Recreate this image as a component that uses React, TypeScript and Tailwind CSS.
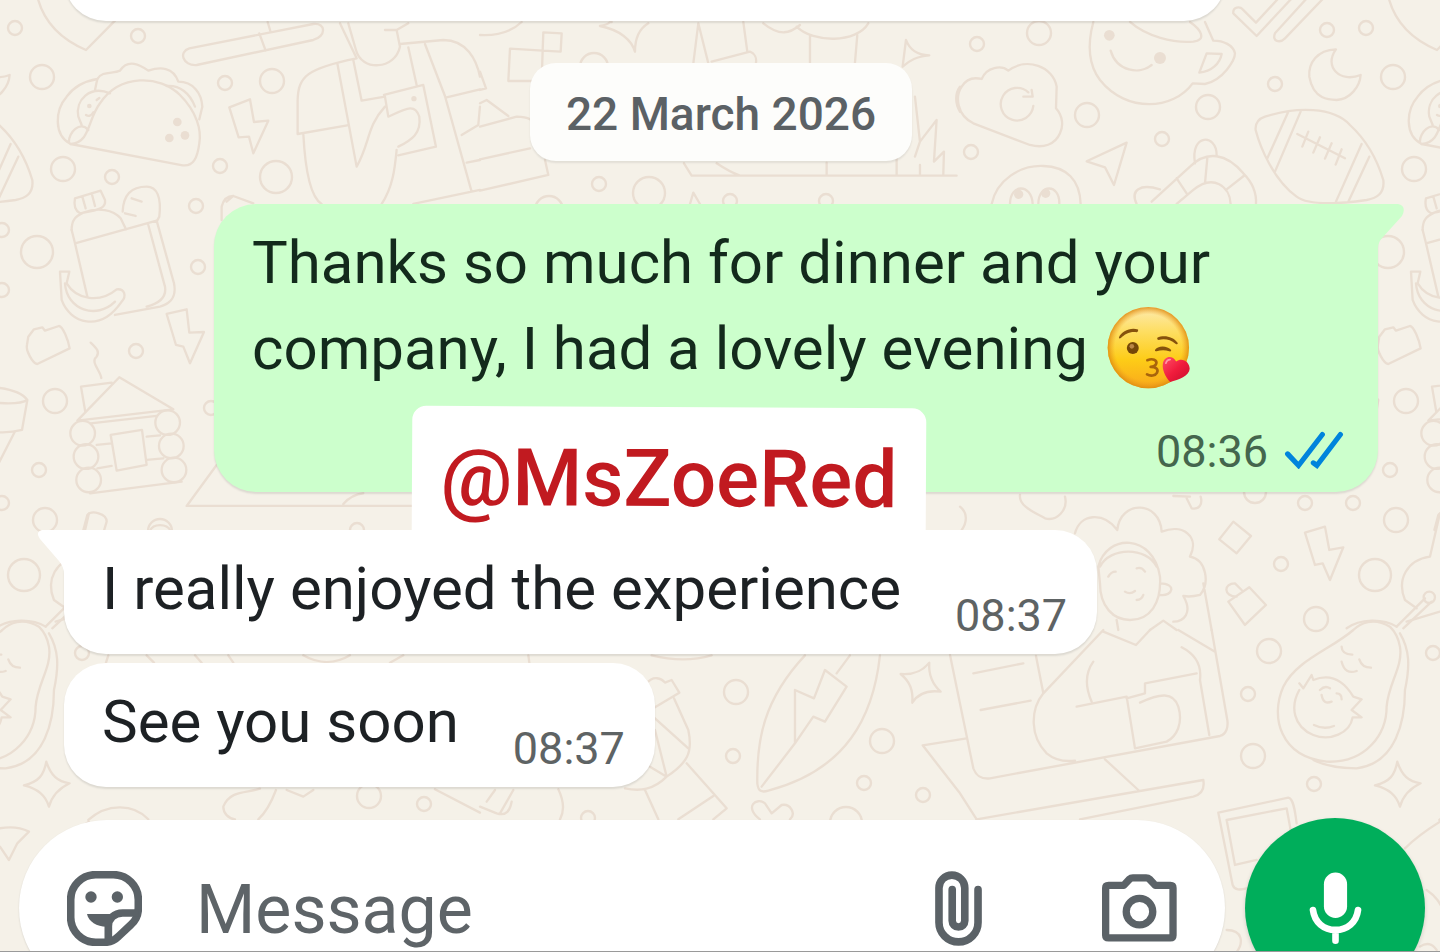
import React, { useState } from 'react';

interface Message {
  id: number;
  text: string;
  time: string;
  tail: boolean;
}

const received: Message[] = [
  { id: 1, text: 'I really enjoyed the experience', time: '08:37', tail: true },
  { id: 2, text: 'See you soon', time: '08:37', tail: false },
];

// [cx, cy, r] of the small rings scattered over the wallpaper
const rings: [number, number, number][] = [
  [15, 28, 7], [138, 36, 7], [42, 77, 12], [225, 83, 7], [272, 81, 12],
  [63, 169, 12], [112, 177, 7], [220, 166, 7], [276, 177, 16], [196, 206, 7],
  [198, 267, 7], [37, 252, 16], [2, 230, 7], [2, 290, 7], [136, 351, 7],
  [55, 401, 12], [211, 408, 7], [39, 470, 7], [2, 503, 7], [45, 520, 12],
  [24, 575, 16], [82, 653, 7], [594, 67, 14], [599, 184, 7], [649, 193, 16],
  [549, 210, 14], [730, 201, 7], [826, 201, 7], [977, 44, 7], [1039, 33, 12],
  [971, 152, 7], [1087, 115, 12], [1208, 107, 12], [1162, 139, 7], [1275, 84, 7],
  [1327, 30, 7], [1305, 503, 7], [1255, 492, 11], [1281, 564, 7],
  [1269, 651, 12], [1316, 619, 12], [1248, 694, 7], [1253, 756, 12], [1314, 784, 7],
  [736, 692, 12], [733, 756, 7], [882, 741, 12], [864, 783, 7], [923, 795, 7],
  [846, 823, 16], [369, 796, 12], [424, 804, 7], [588, 818, 7], [160, 531, 12],
  [357, 530, 7],
];

const Doodles: React.FC = () => (
  <g id="doodles" fill="none" stroke="#eaded2" strokeLinecap="round" strokeLinejoin="round">
    <g strokeWidth="2.4">
      {rings.map(([cx, cy, r], i) => (
        <circle key={i} cx={cx} cy={cy} r={r} />
      ))}
    </g>

    <g transform="scale(.3333)" strokeWidth="7">
      {/* heart */}
      <path d="M105-60C110 40 165 110 258 150L345 62" />
      {/* taco */}
      <path d="M212 432C160 405 165 330 200 290 220 262 255 243 292 237 305 212 340 222 360 212 385 175 420 195 445 212 480 200 520 200 535 245 580 245 605 280 607 320L598 358" />
      <path d="M212 432C270 430 262 360 300 310 360 220 480 225 540 285 590 335 605 390 598 430 592 475 580 500 548 496Z" />
      <path d="M292 237 285 270M330 280C270 255 225 300 235 350L245 375M265 390C240 360 205 400 207 425M500 258C540 255 570 280 585 320M258 345q12 8 22-8M290 300l8-6" />
      <g fill="#eaded2" stroke="none">
        <circle cx="532" cy="366" r="13" />
        <circle cx="508" cy="414" r="13" />
        <circle cx="555" cy="406" r="13" />
        <circle cx="268" cy="318" r="7" />
        <circle cx="1242" cy="296" r="8" />
      </g>
      {/* rolling pin and bolts */}
      <path d="M568 145 940 72C980 68 978 110 940 120L590 195C548 198 535 155 568 145ZM778 100 797 152M803 66 812 96" />
      <path d="M688 322 750 298 762 366 805 362 760 460 747 410 716 412Z" />
      <path d="M500 942 560 928 568 998 612 996 570 1090 550 1040 528 1035Z" />
      {/* person with phone */}
      <path d="M1020 70 1070 175C920 205 895 230 893 300V402L1042 376M1045 70 1068 150C1085 215 1185 210 1200 140L1190 90 1225 70M1155 90H1190M1200 132 1330 120C1400 120 1430 180 1440 230M1012 190 1070 500C1110 430 1100 380 1155 320M1060 180 1085 302 1155 290M1225 142 1250 255M1275 132 1335 288 1415 575M1340 292 1440 268M910 400C915 500 930 590 965 612M1145 612C1180 560 1185 500 1190 450M1152 285 1270 255 1308 440 1195 466M1155 290 1165 350C1220 325 1245 310 1258 350 1265 400 1235 420 1195 440M1440 320 1435 375 1385 405M1240 612 1440 570M1400 488 1440 480" />
      {/* lunch bag */}
      <path d="M215 690C215 660 225 650 250 638 295 620 340 630 362 655L378 688M368 635C370 580 400 560 440 560 470 560 485 590 478 650L470 665M395 595l30 10M375 640l32 8M225 595 302 572 315 600C318 620 310 628 240 640 222 630 222 610 225 595ZM247 590l10 35M275 580l10 38" />
      <path d="M225 730 470 662 522 850C530 890 515 910 480 920L345 945M225 730 215 690M225 730 262 890M445 675 495 860C500 890 480 910 440 920" />
      <path d="M180 815H208L200 850C230 900 300 910 350 868 375 865 380 890 365 905 300 1000 210 970 185 900ZM195 850C200 930 290 960 345 905" />
      <path d="M665 660V620C670 600 680 588 700 588L760 610M680 605 700 588" />
      {/* steam and log cabin */}
      <path d="M272 1028C290 1045 300 1055 290 1070 270 1085 300 1110 304 1134" />
      <path d="M232 1262 358 1132 520 1228 232 1262M256 1236 243 1160 335 1148M272 1270 470 1248M290 1335 335 1330M440 1310 480 1306M292 1405 335 1398M440 1380 490 1375M270 1480 545 1445M332 1305 426 1290 440 1395 350 1412Z" />
      <g>
        <circle cx="248" cy="1300" r="37" />
        <circle cx="258" cy="1370" r="37" />
        <circle cx="266" cy="1440" r="37" />
        <circle cx="503" cy="1268" r="37" />
        <circle cx="514" cy="1338" r="37" />
        <circle cx="522" cy="1410" r="37" />
      </g>
      {/* cup on the left edge */}
      <path d="M-70 1160C0 1160 60 1170 82 1200L66 1290C30 1300-20 1298-60 1290M82 1200C60 1215 0 1210-60 1205M44 1296-40 1460" />
      <path d="M650 1395 560 1518H1240M1030 1512C1050 1490 1070 1482 1090 1480" />
      <path d="M250 1590 262 1545C275 1530 320 1540 320 1565L312 1592M450 1592C460 1570 500 1570 512 1592" />
    </g>

    <g transform="translate(480 0) scale(.3333)" strokeWidth="7">
      <path d="M0 105C60 108 100 90 125 66M190 97 245 100 242 155 188 152ZM188 152 90 146 85 243H185L188 152M0 215 18 265 0 270M360 78C400 70 380 66 395 66M360 78C420 90 455 120 465 155 465 110 480 85 505 70M655 70 640 190M655 70 685 190M790 66 802 155M695 185 810 155C825 160 830 175 828 188M850 70C900 110 930 100 960 75M950 80C1000 130 1130 130 1165 70M990 110V188M1132 105 1125 188" />
      <path d="M1278 120C1290 150 1310 165 1348 166 1310 170 1290 180 1268 200ZM0 310 20 300 85 348M0 380 110 350C130 350 140 352 150 358M0 478 150 445M0 572 205 525 195 480M612 490 635 527H1430M710 490C740 510 760 520 780 527M1040 488V525M1250 475V525M1305 290 1320 425 1370 360 1362 485 1392 455 1390 525M1320 425 1305 470M1320 495V525M1440 260C1425 280 1425 310 1440 335M630 612 640 578 660 612" />
    </g>

    <g transform="translate(960 0) scale(.3333)" strokeWidth="7">
      {/* cloud */}
      <path d="M65 237C80 200 125 195 145 212 200 170 280 200 290 260L288 325C310 350 310 380 300 400 285 435 250 445 210 435L40 370C-10 345-15 290 5 260 20 235 45 232 65 237ZM220 318A49 49 0 1 1 205 277M215 270 218 290H190" />
      {/* smiling cup */}
      <path d="M400 66C380 140 390 200 420 240 500 340 640 330 698 250L735 252C790 240 825 180 825 160 820 135 790 122 760 122L735 66M510 66C560 110 640 130 700 125 740 120 725 90 690 66M740 160 785 162C780 190 755 215 718 218ZM452 152C470 215 540 225 575 195" />
      <g fill="#eaded2" stroke="none">
        <circle cx="448" cy="106" r="16" />
        <circle cx="600" cy="174" r="18" />
        <circle cx="176" cy="583" r="14" />
        <circle cx="257" cy="580" r="14" />
      </g>
      {/* double check */}
      <path d="M820 40C818 20 840 18 848 28L888 68 960-10M820 40 890 108 1000-10M1045-10 945 100C935 125 960 130 975 115L1095-10" />
      <path d="M1128 148C1070 150 1045 190 1048 230 1060 300 1110 300 1130 300 1170 298 1200 260 1202 225 1140 250 1090 200 1128 148Z" />
      {/* football */}
      <path d="M915 350C1010 320 1120 320 1170 375 1230 430 1255 490 1270 540 1275 580 1250 595 1220 600 1150 610 1050 620 1010 590 940 540 900 440 887 390 885 365 900 355 915 350ZM985 335 922 475M1022 335 945 515M1205 432 1128 605M1228 470 1165 605M1012 402 1155 475M1045 395l-18 45M1080 412l-20 46M1115 430l-20 46M1145 448l-18 46" />
      <path d="M500 428 380 484 435 502 462 555Z" />
      <path d="M95 612C110 540 180 495 250 498 320 500 360 540 362 612M150 612C150 550 215 550 218 612M235 612C235 550 300 550 298 612" />
      <path d="M530 612C510 570 540 550 600 568M575 605 690 500C740 450 800 460 850 520 880 550 890 580 888 612M705 490C690 400 770 400 770 465M650 612 700 570C760 520 810 560 812 612M650 535 680 580M742 475 735 550M855 525 800 568" />
    </g>

    <g transform="translate(960 300) scale(.3333)" strokeWidth="7">
      <path d="M180 585C175 620 230 640 255 655 290 665 325 630 315 590M0 620C25 640 20 670 5 690M640 588 690 590M680 595 695 625C720 630 728 610 722 590" />
      {/* person with curly hair */}
      <path d="M345 700C360 640 430 635 472 690 480 600 600 600 605 695 670 670 720 710 690 770 740 780 750 850 720 885 700 890 680 890 670 888 700 940 670 965 640 965M415 800C440 700 580 700 600 830 605 910 570 960 510 960 460 960 420 920 420 850ZM420 800C450 740 560 740 590 800M600 850C650 850 640 890 600 885M470 960 475 990M730 850 755 990M445 830q8-15 22-15M530 805q15-5 25 10M495 875q15 10 30-2M530 900q15 0 20-15M570 990 610 962 650 990" />
      <path d="M820 665 873 708 830 760 778 718ZM1035 698 1095 680 1108 750 1150 742 1110 840 1088 790 1065 795ZM805 905 868 862 918 915 855 975ZM830 890C790 890 790 850 825 850L845 870" />
      <path d="M1258 110 1275 88 1300 82 1308 92 1350 78C1362 80 1378 120 1382 145L1285 192C1270 190 1250 150 1254 135Z" />
      {/* lute */}
      <path d="M1440 640 1410 770C1340 780 1310 840 1335 900L1370 925M1310 980 1395 895M1330 985 1415 905" />
      <circle cx="1408" cy="892" r="17" />
      <path d="M1440 935 1340 965M1160 985C1200 955 1270 955 1310 980" />
    </g>

    <g transform="translate(960 630) scale(.3333)" strokeWidth="7">
      {/* laptop scene */}
      <path d="M-30 75 40 415C50 440 65 448 90 445L780 318C800 312 805 290 802 270L755 0M40 130 190 100M62 240 212 212M228 78 250 190M430 0 250 190C210 240 210 320 260 370 290 395 320 395 345 392M430 5 528 45 570 0M655 0 765 65M400 95C375 130 375 170 395 215M350 230 500 200 525 355M500 205 555 190V160L710 130M540 218C600 190 640 185 655 230 670 280 650 320 620 335L525 355M665 52C710 75 725 110 720 150L748 315M435 388 535 480M50 568 730 450C735 480 720 495 700 500L360 568" />
      <path d="M20 325-112 346 0 490 50 568" />
      {/* avocado */}
      <path d="M1180 0C1110 60 1010 90 970 170 930 260 960 380 1100 395 1220 400 1280 310 1280 230 1285 160 1330 110 1320 50 1315 20 1300 0 1290-10 1240-40 1200-20 1180 0ZM1320 10C1350 60 1350 110 1335 180 1335 270 1310 400 1190 415 1120 415 1080 400 1060 390M1018 160 1030 175 1055 135 1060 150C1110 130 1150 150 1180 200L1205 208 1175 240 1205 262 1178 262C1170 310 1110 335 1060 315 1000 290 990 230 1018 180M1062 285q30 15 60 3M1145 50q0 22 32 24M1145 95q10 40 45 28M1198 88q8 25 35 25M1080 180q15-15 30-5M1085 195q5 30 30 20M1130 190q15 0 15 18" />
      <path d="M1312 395C1325 435 1345 455 1382 460 1350 475 1330 495 1320 530 1310 495 1285 475 1245 466 1290 455 1305 435 1312 395Z" />
      {/* polaroid */}
      <path d="M775 548 985 503C1000 505 1005 540 1010 580M775 548 818 765C825 782 840 780 860 775M800 570 980 535 992 600M800 570 825 705 890 690" />
      <path d="M1173 595C1200 590 1230 590 1260 605L1225 640 1200 690 1173 650M1335 655C1370 620 1400 600 1440 575M1400 780C1430 800 1440 820 1450 840M800 900C850 900 850 940 830 966M1380 950q30-20 50 10" />
    </g>

    <g transform="translate(0 630) scale(.3333)" strokeWidth="7">
      <path d="M265 570C320 520 400 520 445 568M670 530C690 480 740 490 780 476M670 530C670 550 685 565 705 568M828 480C815 515 800 545 775 568M860 480 910 500 940 480M325 76 318 98M440 76 462 98M585 76 605 98M685 76 700 98M910 76C960 105 1010 100 1050 76M1210 76 1170 98M1305 478 1440 548" />
    </g>

    <g transform="translate(480 630) scale(.3333)" strokeWidth="7">
      <path d="M500 160C520 135 545 145 555 158L575 150 598 188 520 235M582 205 625 300C640 370 620 400 560 440 520 480 480 485 435 475M525 265 625 355M525 300 560 440 510 410M495 480 535 568M620 400 740 535 700 568M595 568 700 498M515 76C580 92 640 92 695 76M145 76 148 98" />
      {/* surfboard */}
      <path d="M975 76C850 210 830 330 832 460 835 485 845 488 865 482 1100 420 1180 260 1200 76M1110 76 1070 130M845 470 945 340V180L1002 205 1035 120 1100 170 1035 275 1000 260 945 340" />
      <path d="M1348 98C1345 140 1360 165 1382 185 1345 180 1315 190 1297 218 1300 180 1290 155 1262 132 1300 135 1325 125 1348 98Z" />
      <path d="M840 568C790 530 830 500 855 520L875 550 905 525C930 520 950 550 930 568M235 478C255 520 250 550 240 568M0 530 50 550C80 560 90 540 95 515M20 515 45 480M60 550 100 480" />
    </g>
  </g>
);

const Wallpaper: React.FC = () => (
  <svg className="absolute inset-0 h-full w-full" viewBox="0 0 1440 952" preserveAspectRatio="xMidYMin slice" aria-hidden="true">
    <Doodles />
    <use href="#doodles" x="1351" />
    <use href="#doodles" x="-1351" />
  </svg>
);

const KissEmoji: React.FC = () => (
  <svg className="ml-1 inline-block h-[84px] w-[84px] align-[-21px]" viewBox="50 48 254 254" role="img" aria-label="Face blowing a kiss">
    <defs>
      <linearGradient id="face" x1="0" y1="0" x2="0" y2="1">
        <stop offset="0" stopColor="#fdeab0" />
        <stop offset=".3" stopColor="#fede62" />
        <stop offset=".65" stopColor="#fdcc17" />
        <stop offset="1" stopColor="#f9a81c" />
      </linearGradient>
      <radialGradient id="rim" cx=".5" cy=".5" r=".5">
        <stop offset=".82" stopColor="#f0a020" stopOpacity="0" />
        <stop offset="1" stopColor="#dd8a10" stopOpacity=".85" />
      </radialGradient>
      <linearGradient id="heart" x1="0" y1="0" x2="1" y2="1">
        <stop offset="0" stopColor="#ff5068" />
        <stop offset=".5" stopColor="#f01c3c" />
        <stop offset="1" stopColor="#c80c2c" />
      </linearGradient>
    </defs>
    <circle cx="175" cy="174" r="123" fill="url(#face)" />
    <circle cx="175" cy="174" r="123" fill="url(#rim)" />
    <g fill="#86520c">
      <path d="M86 143C94 124 120 112 144 119Q146 125 140 127C120 124 104 132 92 145Q86 148 86 143Z" />
      <path d="M202 144C222 135 250 140 264 160Q264 166 257 162C242 150 224 146 206 151Q200 150 202 144Z" />
      <path d="M195 181C202 167 232 166 244 181Q245 187 238 185C225 180 212 181 200 185Q194 186 195 181Z" />
      <circle cx="128" cy="175" r="18" fill="#744608" />
      <circle cx="125" cy="170" r="7" fill="#b98546" />
    </g>
    <path d="M172 212C188 205 202 211 199 222Q196 231 182 232C200 232 206 241 201 250 196 259 182 261 171 255" fill="none" stroke="#a8640c" strokeWidth="8" strokeLinecap="round" strokeLinejoin="round" />
    <path d="M241 278C226 262 216 240 219 222 223 199 248 195 259 216 276 202 300 216 300 238 299 260 267 271 241 278Z" fill="url(#heart)" />
    <path d="M228 221q3-11 13-11" fill="none" stroke="#ff9aa8" strokeWidth="5" strokeLinecap="round" />
  </svg>
);

const ReadTicks: React.FC = () => (
  <svg className="-mt-1 h-[38px] w-[60px]" viewBox="580 420 184 118" role="img" aria-label="Read" fill="none" stroke="#0084dc" strokeWidth="16" strokeLinecap="round">
    <path d="M590 491 624 527 698 431" />
    <path d="M670 519 681 527 754 431" />
  </svg>
);

const StickerIcon: React.FC = () => (
  <svg className="h-[75px] w-[75px]" viewBox="203 719 225 225" fill="none" stroke="currentColor" strokeWidth="23" aria-hidden="true">
    <path d="M289 730H342A75 75 0 0 1 417 805V830C417 853 410 867 395 880L358 915C345 928 332 933 315 933H289A75 75 0 0 1 214 858V805A75 75 0 0 1 289 730Z" />
    <path d="M417 845H370C345 845 327 862 327 885V933" />
    <path d="M263 848H350L327 886C295 888 268 872 263 848Z" fill="currentColor" stroke="none" />
    <circle cx="275" cy="797" r="17" fill="currentColor" stroke="none" />
    <circle cx="354" cy="797" r="17" fill="currentColor" stroke="none" />
  </svg>
);

const ClipIcon: React.FC = () => (
  <svg className="h-[75px] w-[47px]" viewBox="45 30 142 226" fill="none" stroke="currentColor" strokeWidth="23" strokeLinecap="round" aria-hidden="true">
    <path d="M175 86V185A59 59 0 0 1 57 185V81A39 39 0 0 1 135 81V180A19 19 0 0 1 97 180V86" />
  </svg>
);

const CameraIcon: React.FC = () => (
  <svg className="h-[68px] w-[75px]" viewBox="547 41 226 204" fill="none" stroke="currentColor" strokeWidth="22" strokeLinejoin="round" aria-hidden="true">
    <path d="M567 75H612L630 56Q634 52 640 52H680Q686 52 690 56L708 75H753Q761 75 761 83V225Q761 233 753 233H567Q558 233 558 225V83Q558 75 567 75Z" />
    <circle cx="660" cy="154" r="40" />
  </svg>
);

const MicIcon: React.FC = () => (
  <svg className="h-[75px] w-[53px]" viewBox="1045 715 160 225" aria-hidden="true">
    <rect x="1090" y="719" width="70" height="137" rx="35" fill="#fff" />
    <path d="M1057 832C1062 870 1090 892 1125 892S1188 870 1193 832M1125 892V925" fill="none" stroke="#fff" strokeWidth="20" strokeLinecap="round" />
  </svg>
);

const ReceivedBubble: React.FC<{ message: Message; children?: React.ReactNode }> = ({ message, children }) => (
  <div className={`relative flex h-[124px] w-fit items-end rounded-[42px] bg-white pr-[30px] pl-[38px] shadow-[0_2px_2px_rgba(0,0,0,0.1)] ${message.tail ? 'rounded-tl-none' : ''}`}>
    {message.tail && (
      <svg className="absolute top-0 -left-[27px] h-11 w-7" viewBox="0 0 28 44" aria-hidden="true">
        <path d="M28 0H5Q-2 2 3 9L22 31Q27 37 27 44H28Z" fill="#fff" />
      </svg>
    )}
    {children}
    <p className="relative mb-[22px] text-[60px] leading-[86px] text-[#1d2124]">{message.text}</p>
    <time className="relative mb-2 ml-[54px] text-[45px] leading-[60px] text-[#5e6364]">{message.time}</time>
  </div>
);

const App: React.FC = () => {
  const [draft, setDraft] = useState('');

  return (
    <div className="relative h-screen overflow-hidden bg-[#f5f1e8] font-['Roboto','Liberation_Sans',sans-serif]">
      <Wallpaper />

      <main className="relative -mt-[103px] flex flex-col pr-[62px] pl-16">
        <div className="flex h-[124px] w-full max-w-[1162px] items-end justify-end rounded-[42px] bg-white pr-[30px] shadow-[0_2px_2px_rgba(0,0,0,0.1)]">
          <time className="mb-2 text-[45px] leading-[60px] text-[#5e6364]">07:34</time>
        </div>

        <div className="mt-[42px] flex h-[98px] items-center self-center rounded-[26px] bg-[#fdfdfb] px-9 pt-1 text-[46px] font-medium text-[#5b6165] shadow-[0_2px_2px_rgba(0,0,0,0.08)]">
          22 March 2026
        </div>

        <div className="relative mt-[43px] w-full max-w-[1164px] self-end rounded-[42px] rounded-tr-none bg-[#ccffcc] pt-4 pb-[10px] pl-[38px] shadow-[0_2px_2px_rgba(0,0,0,0.1)]">
          <svg className="absolute top-0 -right-[26px] h-11 w-7" viewBox="0 0 28 44" aria-hidden="true">
            <path d="M0 0H22Q31 2 26 12L7 33Q2 38 2 44H0Z" fill="#ccffcc" />
          </svg>
          <p className="pr-8 text-[60px] leading-[86px] text-[#132a1c]">
            Thanks so much for dinner and your company, I had a lovely evening <KissEmoji />
          </p>
          <div className="mt-[30px] flex items-center justify-end gap-4 pr-[34px]">
            <time className="text-[45px] leading-[60px] text-[#44664d]">08:36</time>
            <ReadTicks />
          </div>
        </div>

        <div className="mt-[38px] flex flex-col gap-[9px]">
          {received.map(message => (
            <ReceivedBubble key={message.id} message={message}>
              {message.tail && (
                <div className="absolute -top-[123px] left-[348px] flex h-[132px] w-[514px] rotate-[0.3deg] items-center justify-center rounded-t-[14px] bg-white pt-3 text-[80px] font-medium text-[#c11a20]">
                  @MsZoeRed
                </div>
              )}
            </ReceivedBubble>
          ))}
        </div>
      </main>

      <form className="relative mt-[31px] flex items-start gap-5 pr-[15px] pl-[19px]" onSubmit={e => e.preventDefault()}>
        <div className="mt-[2px] flex h-44 min-w-0 flex-1 items-center rounded-full bg-white px-12 text-[#5b6267] shadow-[0_1px_2px_rgba(0,0,0,0.12)]">
          <button type="button" aria-label="Stickers"><StickerIcon /></button>
          <input
            className="ml-[54px] min-w-0 flex-1 bg-transparent pt-1 text-[68px] text-[#1d2124] outline-none placeholder:text-[#5e6468]"
            aria-label="Message"
            placeholder="Message"
            value={draft}
            onChange={e => setDraft(e.target.value)}
          />
          <button type="button" aria-label="Attach"><ClipIcon /></button>
          <button type="button" aria-label="Camera" className="ml-[120px]"><CameraIcon /></button>
        </div>
        <button type="button" aria-label="Record voice message" className="flex h-[180px] w-[180px] shrink-0 items-center justify-center rounded-full bg-[#00ae5b] shadow-[0_2px_4px_rgba(0,0,0,0.15)]">
          <MicIcon />
        </button>
      </form>

      <div className="absolute inset-x-0 bottom-0 h-px bg-[#9a9a9a]" />
    </div>
  );
};

export default App;
